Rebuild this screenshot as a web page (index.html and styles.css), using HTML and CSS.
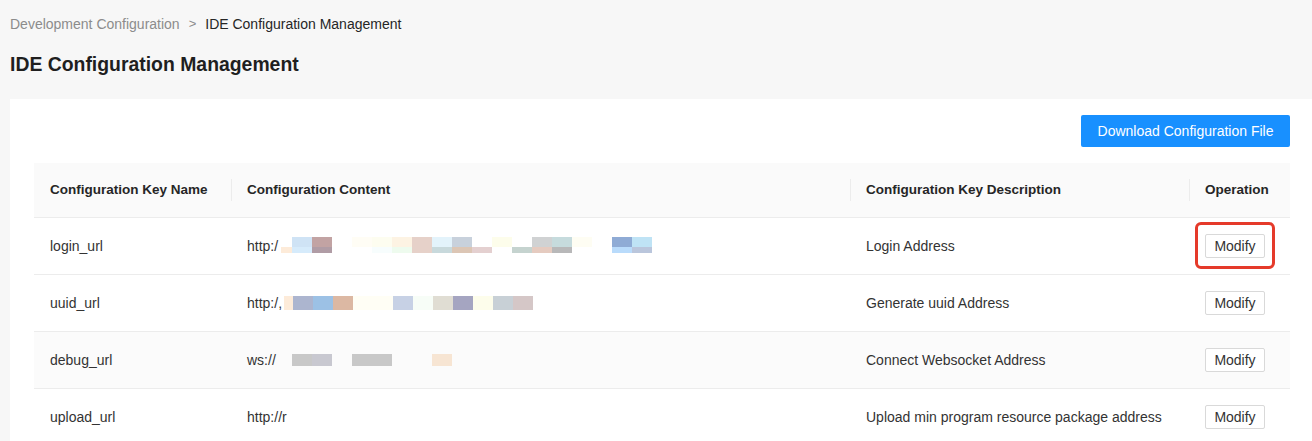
FILE: index.html
```html
<!DOCTYPE html>
<html lang="en">
<head>
<meta charset="utf-8">
<title>IDE Configuration Management</title>
<link rel="stylesheet" href="styles.css">
</head>
<body>
<div class="page">
  <nav class="breadcrumb">
    <span class="crumb-link">Development Configuration</span>
    <span class="crumb-sep">&gt;</span>
    <span class="crumb-current">IDE Configuration Management</span>
  </nav>
  <h1 class="title">IDE Configuration Management</h1>
  <section class="card">
    <div class="toolbar">
      <button class="btn-primary" type="button">Download Configuration File</button>
    </div>
    <table class="config-table">
      <colgroup>
        <col class="c-key"><col class="c-content"><col class="c-desc"><col class="c-op">
      </colgroup>
      <thead>
        <tr>
          <th>Configuration Key Name</th>
          <th class="sep">Configuration Content</th>
          <th class="sep">Configuration Key Description</th>
          <th class="sep">Operation</th>
        </tr>
      </thead>
      <tbody>
        <tr>
          <td>login_url</td>
          <td><span class="val">http:/</span><span class="mosaic m1"></span></td>
          <td>Login Address</td>
          <td><span class="op-wrap"><button class="btn" type="button">Modify</button><span class="highlight"></span></span></td>
        </tr>
        <tr>
          <td>uuid_url</td>
          <td><span class="val">http:/,</span><span class="mosaic m2"></span></td>
          <td>Generate uuid Address</td>
          <td><button class="btn" type="button">Modify</button></td>
        </tr>
        <tr class="hover">
          <td>debug_url</td>
          <td><span class="val">ws://</span><span class="mosaic m3"></span></td>
          <td>Connect Websocket Address</td>
          <td><button class="btn" type="button">Modify</button></td>
        </tr>
        <tr>
          <td>upload_url</td>
          <td><span class="val">http://r</span></td>
          <td>Upload min program resource package address</td>
          <td><button class="btn" type="button">Modify</button></td>
        </tr>
      </tbody>
    </table>
  </section>
</div>
</body>
</html>
```

FILE: styles.css
```css
* { box-sizing: border-box; }

html, body {
  margin: 0;
  padding: 0;
  background: #f7f7f7;
  overflow: hidden;
}

body {
  font-family: "Liberation Sans", Arial, sans-serif;
  color: #333;
  font-size: 14px;
}

.page {
  padding: 14px 0 0 10px;
}

.breadcrumb {
  display: flex;
  align-items: center;
  gap: 9px;
  font-size: 14px;
  line-height: 20px;
  height: 20px;
}

.crumb-link { color: #8c8c8c; }
.crumb-sep { color: #8c8c8c; font-size: 13px; }
.crumb-current { color: #262626; }

.title {
  margin: 16px 0 0 0;
  font-size: 19.4px;
  line-height: 28px;
  font-weight: 700;
  color: #1f1f1f;
}

.card {
  margin-top: 21px;
  background: #fff;
  padding: 16px 22px 0 24px;
}

.toolbar {
  display: flex;
  justify-content: flex-end;
  margin-bottom: 16px;
}

.btn-primary {
  height: 32px;
  width: 209px;
  border: none;
  border-radius: 2px;
  background: #1890ff;
  color: #fff;
  font-family: inherit;
  font-size: 14px;
  padding: 0;
  white-space: nowrap;
}

.config-table {
  width: 1256px;
  border-collapse: collapse;
  table-layout: fixed;
}

.c-key { width: 197px; }
.c-content { width: 619px; }
.c-desc { width: 339px; }
.c-op { width: 101px; }

.config-table th {
  position: relative;
  height: 54px;
  padding: 0 16px;
  background: #fafafa;
  text-align: left;
  font-size: 13.5px;
  font-weight: 700;
  color: #262626;
  white-space: nowrap;
  border-bottom: 1px solid #ececec;
}

.config-table th.sep::before {
  content: "";
  position: absolute;
  left: 0;
  top: 50%;
  width: 1px;
  height: 22px;
  transform: translateY(-50%);
  background: #ececec;
}

.config-table td {
  height: 57px;
  padding: 0 16px;
  border-bottom: 1px solid #ececec;
  color: #333;
  white-space: nowrap;
}

.config-table tr.hover td { background: #fbfbfb; }

.val { vertical-align: middle; }

.mosaic {
  display: inline-block;
  vertical-align: middle;
}

.m1 {
  width: 371px;
  height: 16px;
  margin-top: -2px;
  margin-left: 3px;
  background:
    linear-gradient(to right,
      #fff 0 11px,
      #cfe3f5 11px 31px,
      #c2a3a3 31px 51px,
      #fff 51px 71px,
      #fffdf5 71px 91px,
      #fdfdf0 91px 111px,
      #fdf3e3 111px 131px,
      #e6d1c9 131px 151px,
      #e3f3fb 151px 171px,
      #c8d1dc 171px 191px,
      #fff 191px 211px,
      #fdfdeb 211px 231px,
      #fff 231px 251px,
      #d0d2d3 251px 271px,
      #c6dbdd 271px 291px,
      #fefdf3 291px 311px,
      #fff 311px 331px,
      #8fabd5 331px 351px,
      #bfe3f5 351px 371px) top / 100% 10px no-repeat,
    linear-gradient(to right,
      #fdebd9 0 11px,
      #d6ebfb 11px 31px,
      #b09ca5 31px 51px,
      #fff 51px 91px,
      #f7fdfd 91px 111px,
      #eefbee 111px 131px,
      #e6d1c9 131px 151px,
      #c8d9dc 151px 171px,
      #dcc6b5 171px 191px,
      #e4d0d0 191px 211px,
      #fff 211px 231px,
      #c5d3cf 231px 251px,
      #e5cbc0 251px 271px,
      #b8b8b9 271px 291px,
      #fff 291px 331px,
      #b9dbfb 331px 351px,
      #bac6dc 351px 371px) bottom / 100% 6px no-repeat;
}

.m2 {
  width: 249px;
  height: 14px;
  margin-left: 2px;
  background: linear-gradient(to right,
    #fdebd9 0 9px,
    #acb5cf 9px 29px,
    #9cc1e5 29px 49px,
    #dcb8a3 49px 69px,
    #fffef5 69px 109px,
    #c7d1e5 109px 129px,
    #f7fdf7 129px 149px,
    #e0ddd3 149px 169px,
    #a5a5c1 169px 189px,
    #fdfdeb 189px 209px,
    #c8d0d6 209px 229px,
    #d5c7c7 229px 249px);
}

.m3 {
  width: 160px;
  height: 12px;
  margin-left: 16px;
  background: linear-gradient(to right,
    #c8c8c8 0 20px,
    #c8c8d0 20px 40px,
    transparent 40px 60px,
    #c8c8c8 60px 100px,
    transparent 100px 140px,
    #f7e5d3 140px 160px);
}

.btn {
  height: 24px;
  width: 60px;
  padding: 0;
  border: 1px solid #d9d9d9;
  border-radius: 2px;
  background: #fff;
  color: #333;
  font-family: inherit;
  font-size: 14px;
  line-height: 22px;
  vertical-align: middle;
}

.op-wrap {
  position: relative;
  display: inline-block;
  vertical-align: middle;
}

.op-wrap .btn { display: block; }

.highlight {
  position: absolute;
  left: -10px;
  right: -10px;
  top: -12px;
  bottom: -11px;
  border: 3px solid #e53a2a;
  border-radius: 6px;
}
```
